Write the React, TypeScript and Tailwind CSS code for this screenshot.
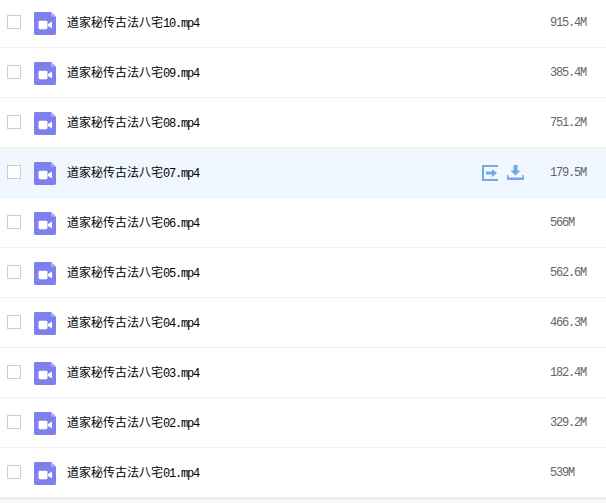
const rows = [
  ["10", "915.4M"],
  ["09", "385.4M"],
  ["08", "751.2M"],
  ["07", "179.5M"],
  ["06", "566M"],
  ["05", "562.6M"],
  ["04", "466.3M"],
  ["03", "182.4M"],
  ["02", "329.2M"],
  ["01", "539M"],
];

function FileIcon() {
  return (
    <svg width="22" height="23" viewBox="0 0 22 24" preserveAspectRatio="none" className="mt-[2px] shrink-0">
      <path d="M1.5 0H17L22 5V22.5A1.5 1.5 0 0 1 20.5 24H1.5A1.5 1.5 0 0 1 0 22.5V1.5A1.5 1.5 0 0 1 1.5 0Z" fill="#7f80f0" />
      <path d="M17 0L22 5H18A1 1 0 0 1 17 4Z" fill="#a9a9f5" />
      <rect x="4.5" y="9" width="9" height="9" rx="1.5" fill="#fff" />
      <path d="M14 12.5L18 10V17L14 14.5Z" fill="#fff" />
    </svg>
  );
}

function Row({ id, size, active }: { id: string; size: string; active: boolean }) {
  return (
    <div className={`flex h-[50px] items-center border-b border-[#f1f2f4] pl-[7px] ${active ? "bg-[#f0f7fe]" : "bg-white"}`}>
      <div className="-mt-[1px] h-[14px] w-[14px] shrink-0 border border-[#cdcdcd] bg-white" />
      <div className="ml-[13px] flex">
        <FileIcon />
      </div>
      <div className="ml-[11px] flex w-[132px] items-baseline whitespace-nowrap text-black">
        <span className="text-[12px] font-['Noto_Sans_CJK_SC',sans-serif]">道家秘传古法八宅</span>
        <span className="text-[12px] tracking-[-1.2px] font-['Liberation_Mono',monospace]">{id}.mp4</span>
      </div>
      <div className="flex w-[325px] shrink-0 items-center justify-end">
        {active && (
          <div className="flex items-center gap-[9px]">
            <svg width="16" height="16" viewBox="0 0 16 16">
              <path d="M16 1H1V15H16" fill="none" stroke="#74a9e6" strokeWidth="2" />
              <path d="M4 6.5H10V4L15 8L10 12V9.5H4Z" fill="#74a9e6" />
            </svg>
            <svg width="17" height="16" viewBox="0 0 17 16">
              <path d="M6.5 0H10.5V5.5H13.5L8.5 10.5L3.5 5.5H6.5Z" fill="#74a9e6" />
              <path d="M0 10H1.5V12.5H15.5V10H17V15H0Z" fill="#74a9e6" />
            </svg>
          </div>
        )}
      </div>
      <div className="ml-[26px] text-[12px] tracking-[-1.2px] text-[#666666] font-['Liberation_Mono',monospace]">{size}</div>
    </div>
  );
}

export default function App() {
  return (
    <div className="h-[503px] w-[606px] overflow-hidden bg-[#f8f8f8]">
      <div className="-mt-[2px]">
        {rows.map(([id, size]) => (
          <Row key={id} id={id} size={size} active={id === "07"} />
        ))}
        <div className="h-[1px] bg-[#e6e9f5]" />
      </div>
    </div>
  );
}
